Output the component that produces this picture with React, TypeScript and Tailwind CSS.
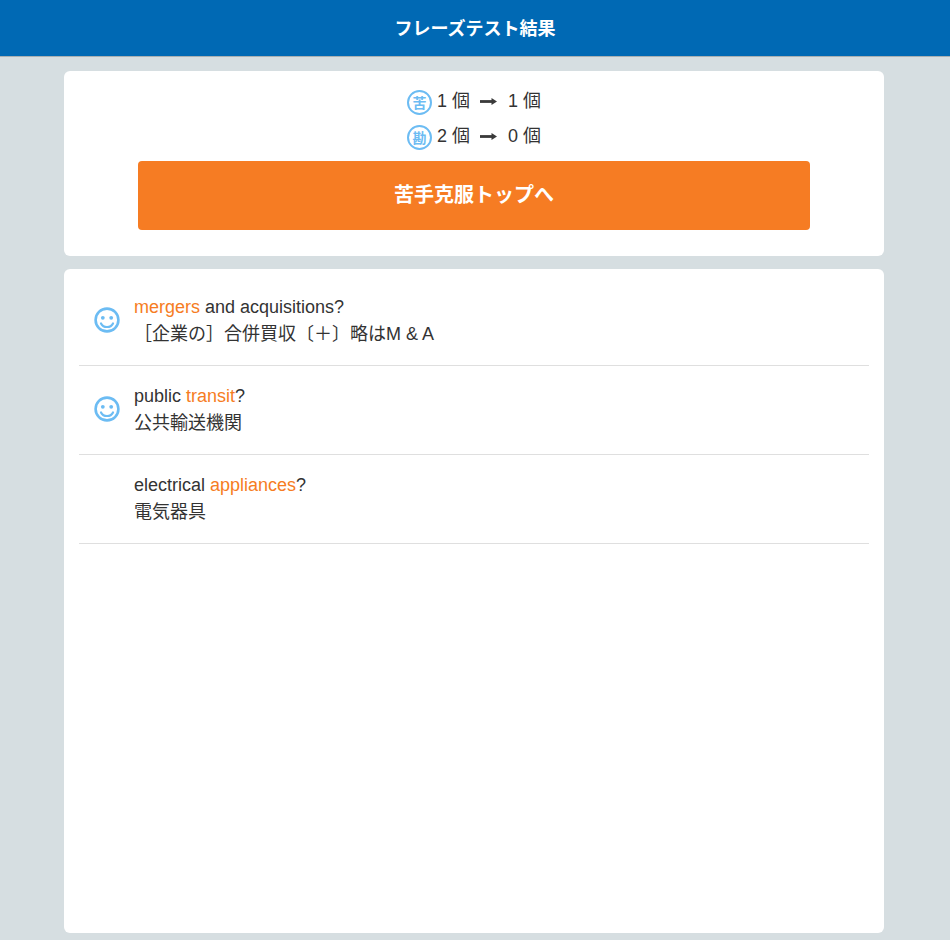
const font = "font-['Liberation_Sans','Noto_Sans_CJK_JP',sans-serif]";

function Smile() {
  return (
    <svg width="26" height="26" viewBox="0 0 26 26" fill="none" stroke="#6cbcf3" strokeLinecap="round" className="mb-[2px] -ml-[0.5px]">
      <circle cx="13" cy="13" r="11.4" strokeWidth="2.6" />
      <path d="M7 16.4c1.2 2.4 3.4 3.6 6 3.6s4.8-1.2 6-3.6" strokeWidth="2.2" />
      <circle cx="8.8" cy="10.8" r="1.9" fill="#6cbcf3" stroke="none" />
      <circle cx="17.2" cy="10.8" r="1.9" fill="#6cbcf3" stroke="none" />
    </svg>
  );
}

function Arrow() {
  return (
    <svg width="17" height="9" viewBox="0 0 17 9" className="ml-[10px] mr-[11px] -mt-[3px]">
      <rect x="0" y="3.1" width="13" height="2.8" fill="#3a3a3a" />
      <path d="M11.5 1 17 4.5 11.5 8Z" fill="#3a3a3a" />
    </svg>
  );
}

function Badge({ label }: { label: string }) {
  return (
    <span className="flex h-[25px] w-[25px] items-center justify-center rounded-full border-2 border-[#6cbcf3] text-[14px] font-semibold leading-none text-[#6cbcf3]">
      {label}
    </span>
  );
}

function Count({ label, from, to }: { label: string; from: number; to: number }) {
  return (
    <div className="flex h-[35px] items-center justify-center text-[18px] text-[#333]">
      <Badge label={label} />
      <span className="ml-[5px] -mt-[3px]">{from} 個</span>
      <Arrow />
      <span className="-mt-[3px]">{to} 個</span>
    </div>
  );
}

const rows = [
  { pre: "", hit: "mergers", post: " and acquisitions?", ja: "［企業の］合併買収〔＋〕略はM & A", smile: true },
  { pre: "public ", hit: "transit", post: "?", ja: "公共輸送機関", smile: true },
  { pre: "electrical ", hit: "appliances", post: "?", ja: "電気器具", smile: false },
];

export default function App() {
  return (
    <div className={`${font} h-[940px] overflow-hidden bg-[#d6dee1]`}>
      <header className="flex h-[57px] items-center justify-center border-b border-[#a9b0b3] bg-[#0069b4] pt-[2px] text-[18px] font-bold text-white">
        フレーズテスト結果
      </header>
      <main className="ml-[64px] mt-[14px] flex w-[820px] flex-col gap-[13px]">
        <section className="rounded-[6px] bg-white px-[74px] pt-[14px] pb-[26px]">
          <Count label="苦" from={1} to={1} />
          <Count label="勘" from={2} to={0} />
          <button className="mt-[6px] h-[69px] w-full rounded-[4px] bg-[#f67c23] pb-[2px] text-[20px] font-bold text-white">
            苦手克服トップへ
          </button>
        </section>
        <section className="h-[664px] rounded-[6px] bg-white px-[15px] pt-[8px]">
          {rows.map((r) => (
            <div key={r.hit} className="flex h-[89px] items-center border-b border-[#dfdfdf] pl-[15px]">
              <div className="w-[40px]">{r.smile && <Smile />}</div>
              <div className="text-[18px] leading-[27px] text-[#333]">
                <div>
                  {r.pre}
                  <span className="text-[#f67c23]">{r.hit}</span>
                  {r.post}
                </div>
                <div>{r.ja}</div>
              </div>
            </div>
          ))}
        </section>
      </main>
    </div>
  );
}
